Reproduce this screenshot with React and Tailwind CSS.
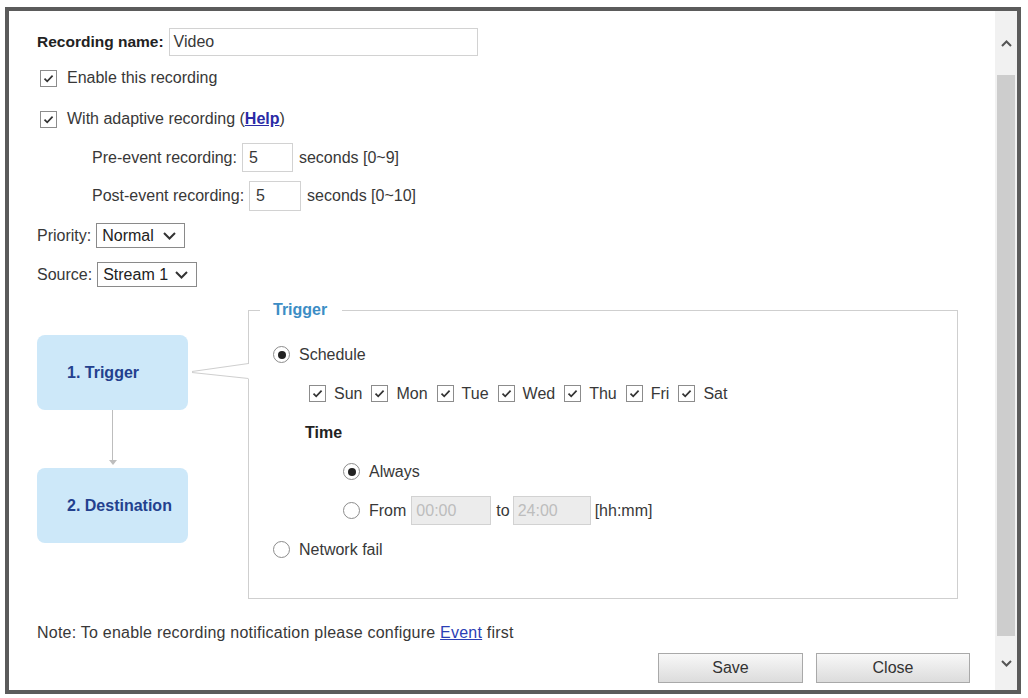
import React from "react";

const Check = () => (
  <span className="inline-flex h-[17px] w-[17px] shrink-0 items-center justify-center border border-[#8c8c8c] bg-white">
    <svg width="11" height="9" viewBox="0 0 11 9">
      <path d="M1.5 4.6 L4.2 7.3 L9.6 1.6" fill="none" stroke="#333" strokeWidth="1.7" />
    </svg>
  </span>
);

const Radio = ({ on }) => (
  <span className="inline-flex h-[17px] w-[17px] shrink-0 items-center justify-center rounded-full border border-[#8c8c8c] bg-white">
    {on && <span className="h-[8px] w-[8px] rounded-full bg-[#222]" />}
  </span>
);

const Chevron = () => (
  <svg width="13" height="8" viewBox="0 0 13 8">
    <path d="M1 1 L6.5 6.5 L12 1" fill="none" stroke="#333" strokeWidth="2" />
  </svg>
);

const Select = ({ value, width }) => (
  <span className={`ml-[5px] flex h-[25px] items-center justify-between border border-[#8a8a8a] bg-white pl-[5px] pr-[8px] text-[#222] ${width}`}>
    {value}
    <Chevron />
  </span>
);

const TimeBox = ({ value, width }) => (
  <span className={`flex h-[29px] items-center border border-[#d2d2d2] bg-[#ececec] pl-[4px] text-[#bdbdbd] ${width}`}>
    {value}
  </span>
);

const days = ["Sun", "Mon", "Tue", "Wed", "Thu", "Fri", "Sat"];

export default function App() {
  return (
    <div className="h-[698px] w-[1028px] bg-white pl-[5px] pt-[7px] font-['Liberation_Sans',Arial,sans-serif] text-[16px] leading-none text-[#383838]">
      <div className="flex h-[687px] w-[1016px] border-4 border-[#5b5b5b]">
        {/* form */}
        <div className="flex flex-1 flex-col pl-[28px] pt-[17px]">
          <div className="flex h-[28px] items-center">
            <span className="text-[15.5px] font-bold text-[#222]">Recording name:</span>
            <span className="ml-[5px] flex h-[28px] w-[309px] items-center border border-[#d2d2d2] pl-[4px]">Video</span>
          </div>

          <div className="mt-[10px] flex h-[24px] items-center gap-[10px] pl-[3px]">
            <Check />
            <span>Enable this recording</span>
          </div>

          <div className="mt-[17px] flex h-[24px] items-center gap-[10px] pl-[3px]">
            <Check />
            <span>
              With adaptive recording (
              <span className="font-bold text-[#2a2aa6] underline">Help</span>)
            </span>
          </div>

          <div className="mt-[12px] flex h-[29px] items-center pl-[55px]">
            <span>Pre-event recording:</span>
            <span className="ml-[5px] flex h-[29px] w-[51px] items-center border border-[#d2d2d2] pl-[6px]">5</span>
            <span className="ml-[6px]">seconds [0~9]</span>
          </div>

          <div className="mt-[9px] flex h-[30px] items-center pl-[55px]">
            <span>Post-event recording:</span>
            <span className="ml-[5px] flex h-[30px] w-[52px] items-center border border-[#d2d2d2] pl-[6px]">5</span>
            <span className="ml-[6px]">seconds [0~10]</span>
          </div>

          <div className="mt-[12px] flex h-[25px] items-center">
            <span>Priority:</span>
            <Select value="Normal" width="w-[89px]" />
          </div>

          <div className="mt-[14px] flex h-[25px] items-center">
            <span>Source:</span>
            <Select value="Stream 1" width="w-[100px]" />
          </div>

          {/* trigger section */}
          <div className="relative mt-[14px] flex">
            <div className="flex w-[151px] flex-col">
              <div className="mt-[34px] flex h-[75px] items-center rounded-[8px] bg-[#cde8f9] pl-[30px] font-bold text-[#23408e]">
                1. Trigger
              </div>
              <div className="flex h-[58px] flex-col items-center">
                <div className="h-[50px] w-px bg-[#bdbdbd]" />
                <svg width="8" height="5" viewBox="0 0 8 5">
                  <path d="M0 0 L8 0 L4 5 Z" fill="#bdbdbd" />
                </svg>
              </div>
              <div className="flex h-[75px] items-center rounded-[8px] bg-[#cde8f9] pl-[30px] font-bold text-[#23408e]">
                2. Destination
              </div>
            </div>

            <fieldset className="ml-[60px] h-[298px] w-[710px] border border-[#cfcfcf]">
              <legend className="ml-[11px] pl-[13px] pr-[15px] font-bold leading-[18px] text-[#3c8dc5]">Trigger</legend>
              <div className="flex flex-col pl-[24px] pt-[16px]">
                <div className="flex h-[39px] items-center gap-[9px]">
                  <Radio on />
                  <span>Schedule</span>
                </div>
                <div className="flex h-[39px] items-center gap-[9px] pl-[36px]">
                  {days.map((d) => (
                    <span key={d} className="flex items-center gap-[8px]">
                      <Check />
                      <span>{d}</span>
                    </span>
                  ))}
                </div>
                <div className="flex h-[39px] items-center pl-[32px] font-bold text-[#222]">Time</div>
                <div className="flex h-[39px] items-center gap-[9px] pl-[70px]">
                  <Radio on />
                  <span>Always</span>
                </div>
                <div className="flex h-[39px] items-center pl-[70px]">
                  <Radio />
                  <span className="ml-[9px] mr-[5px]">From</span>
                  <TimeBox value="00:00" width="w-[80px]" />
                  <span className="ml-[5px] mr-[3px]">to</span>
                  <TimeBox value="24:00" width="w-[78px]" />
                  <span className="ml-[4px]">[hh:mm]</span>
                </div>
                <div className="flex h-[39px] items-center gap-[9px]">
                  <Radio />
                  <span>Network fail</span>
                </div>
              </div>
            </fieldset>

            {/* callout from step box to fieldset */}
            <svg className="absolute left-[151px] top-[58px]" width="64" height="26" viewBox="0 0 64 26">
              <rect x="59" y="5" width="3" height="15" fill="#fff" />
              <path d="M4 12.5 L60.5 4.5 M4 13.5 L60.5 19.5" stroke="#cfcfcf" strokeWidth="1.2" fill="none" />
            </svg>
          </div>

          <div className="mt-[24px] flex h-[20px] items-center tracking-[0.23px]">
            <span>
              Note: To enable recording notification please configure{" "}
              <span className="text-[#2b3fb5] underline">Event</span> first
            </span>
          </div>

          <div className="mt-[10px] flex justify-end gap-[13px] pr-[25px]">
            <button className="h-[30px] w-[145px] border border-[#a9a9a9] bg-gradient-to-b from-[#f8f8f8] to-[#dcdcdc] text-[#333]">
              Save
            </button>
            <button className="h-[30px] w-[154px] border border-[#a9a9a9] bg-gradient-to-b from-[#f8f8f8] to-[#dcdcdc] text-[#333]">
              Close
            </button>
          </div>
        </div>

        {/* scrollbar */}
        <div className="flex w-[22px] flex-col bg-[#f1f1f1]">
          <div className="flex h-[64px] items-center justify-center">
            <svg width="11" height="7" viewBox="0 0 11 7">
              <path d="M1 6 L5.5 1.5 L10 6" fill="none" stroke="#555" strokeWidth="2" />
            </svg>
          </div>
          <div className="mx-[2px] h-[561px] bg-[#cdcdcd]" />
          <div className="flex flex-1 items-center justify-center">
            <svg width="11" height="7" viewBox="0 0 11 7">
              <path d="M1 1 L5.5 5.5 L10 1" fill="none" stroke="#555" strokeWidth="2" />
            </svg>
          </div>
        </div>
      </div>
    </div>
  );
}
